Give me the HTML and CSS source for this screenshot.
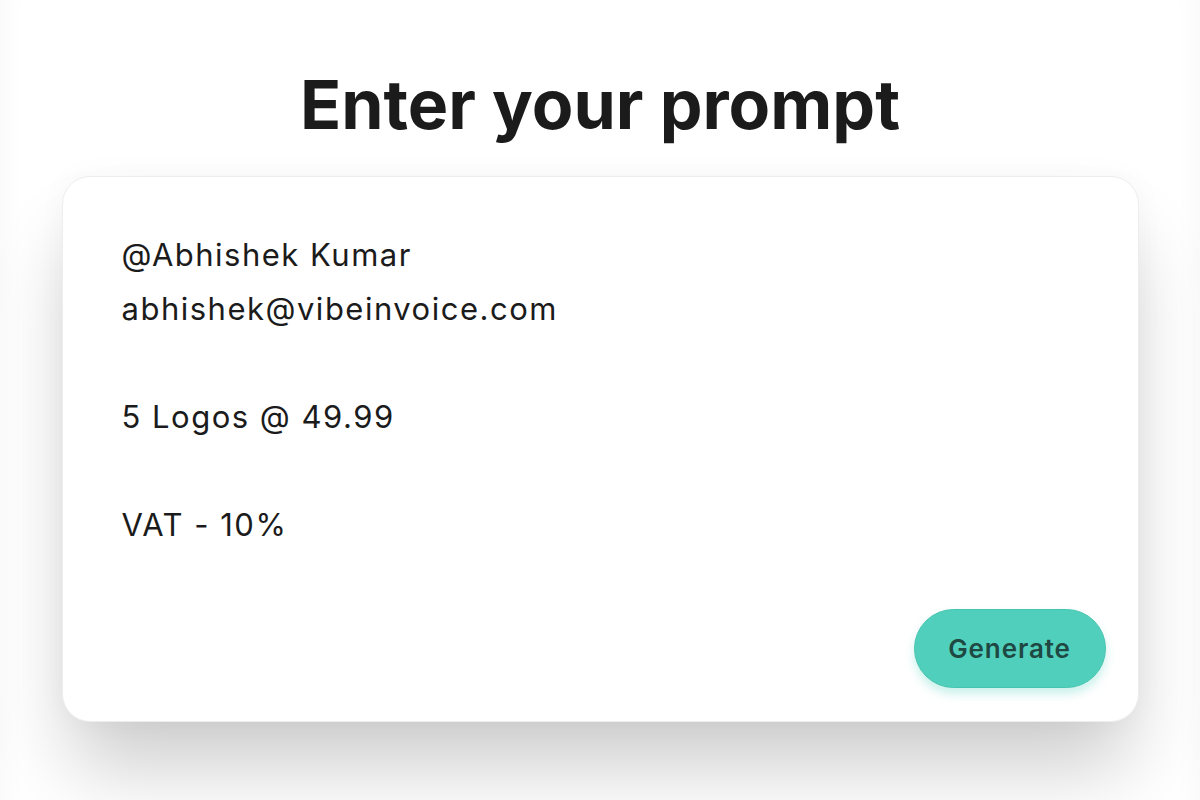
FILE: index.html
```html
<!DOCTYPE html>
<html lang="en">
<head>
<meta charset="utf-8">
<title>Enter your prompt</title>
<link rel="stylesheet" href="styles.css">
</head>
<body>
<main class="page">
  <h1 class="title">Enter your prompt</h1>
  <section class="card">
    <div class="prompt">
      <p class="line">@Abhishek Kumar</p>
      <p class="line">abhishek@vibeinvoice.com</p>
      <p class="line">&nbsp;</p>
      <p class="line">5 Logos @ 49.99</p>
      <p class="line">&nbsp;</p>
      <p class="line">VAT - 10%</p>
    </div>
    <div class="actions">
      <button class="generate" type="button">Generate</button>
    </div>
  </section>
</main>
</body>
</html>
```

FILE: styles.css
```css
html, body {
  margin: 0;
  padding: 0;
  height: 100%;
}
body {
  background: #ffffff;
  font-family: Inter, "Noto Sans", sans-serif;
  color: #1b1b1b;
  overflow: hidden;
}
.page {
  height: 800px;
  box-sizing: border-box;
  padding-top: 63px;
  display: flex;
  flex-direction: column;
  align-items: center;
  box-shadow: inset 24px 0 24px -20px rgba(0,0,0,0.035), inset -24px 0 24px -20px rgba(0,0,0,0.035);
}
.title {
  margin: 0;
  font-size: 68px;
  font-weight: 700;
  line-height: 82px;
  letter-spacing: 0;
  color: #1b1b1b;
}
.card {
  margin-top: 31px;
  width: 1077px;
  height: 546px;
  box-sizing: border-box;
  background: #ffffff;
  border: 1.5px solid #ededed;
  border-radius: 28px;
  box-shadow: 0 55px 80px -10px rgba(0,0,0,0.2), 0 0 30px rgba(0,0,0,0.035);
  display: flex;
  flex-direction: column;
}
.prompt {
  padding: 51px 59px 0;
  flex: 1;
}
.line {
  margin: 0;
  font-size: 31px;
  line-height: 54px;
  font-weight: 400;
  letter-spacing: 1.5px;
  color: #1b1b1b;
}
.actions {
  display: flex;
  justify-content: flex-end;
  padding: 0 32px 33px;
}
.generate {
  width: 192px;
  height: 79px;
  border-radius: 40px;
  border: 1px solid #47c4b0;
  background: #50d0bc;
  color: #1f4843;
  font-family: Inter, "Noto Sans", sans-serif;
  font-size: 26px;
  font-weight: 600;
  letter-spacing: 0.9px;
  box-shadow: 0 6px 10px rgba(80,208,188,0.3);
  cursor: pointer;
}
```
